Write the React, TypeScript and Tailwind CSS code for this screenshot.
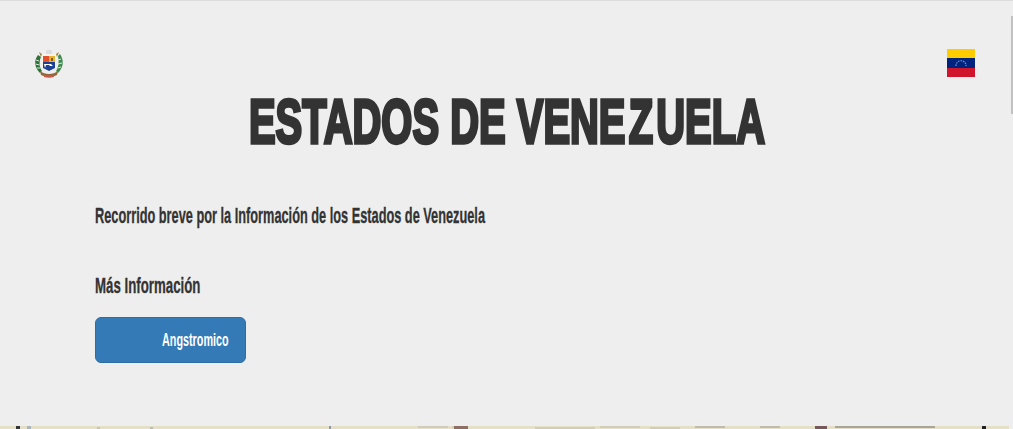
const CoatOfArms = () => (
  <svg width="30" height="30" viewBox="0 0 30 30" className="block">
    <circle cx="15" cy="3.500" r="3" fill="#dcdcdc" />
    <path d="M8 5h14v14l-7 4-7-4z" fill="#f6f4ee" />
    <path d="M9 7h6v6H9z" fill="#e2512a" />
    <path d="M15 7h6v6h-6z" fill="#e8b32c" />
    <path d="M17 9h2v3h-2z" fill="#8a5a22" />
    <path d="M9 13h12v6l-6 3-6-3z" fill="#1d3f94" />
    <path d="M10 15h7l2 2h-3l-1-1h-3l-1 3z" fill="#fff" />
    <path d="M5 3l3 2-1 3z" fill="#9c8a3c" />
    <path d="M25 3l-3 2 1 3z" fill="#9c8a3c" />
    <path d="M4 6C0 11 0 18 6 24l2-2C5 18 5 12 7 8z" fill="#2c7238" />
    <path d="M2 11l3 1M1.500 15l4 1M3 19l3 0" stroke="#dfe8dc" strokeWidth="1" />
    <path d="M26 5c4 6 4 13-2 19l-2-2c3-4 3-10 2-15z" fill="#3f8a4d" />
    <path d="M27 10l-3 1M28 14l-4 1M27 18l-3 1" stroke="#dfe8dc" strokeWidth="1" />
    <path d="M6 22c5 4 13 4 18 0l-1 4c-4 2-12 2-16 0z" fill="#94683a" />
    <path d="M10 26c3 1 7 1 10 0v2c-3 1-7 1-10 0z" fill="#c9574a" />
  </svg>
);

const Flag = () => (
  <svg width="28" height="28" viewBox="0 0 28 28" className="block">
    <rect width="28" height="9" fill="#ffcc00" />
    <rect y="9" width="28" height="10" fill="#00247d" />
    <rect y="19" width="28" height="9" fill="#cf142b" />
    <path d="M9 17c0-7 10-7 10 0" fill="none" stroke="#7f95d0" strokeWidth="1.200" strokeDasharray="1.500 1" />
  </svg>
);

const MapEdge = () => (
  <svg width="1009" height="3" viewBox="0 0 1009 3" className="block">
    <rect width="1009" height="3" fill="#e6dfc8" />
    <rect x="16" width="4" height="3" fill="#333" />
    <rect x="27" width="4" height="3" fill="#a9b4bb" />
    <rect x="97" y="1" width="3" height="2" fill="#c8c4b4" />
    <rect x="150" y="1" width="3" height="2" fill="#bdbcb4" />
    <rect x="329" width="2" height="3" fill="#8a97a6" />
    <path d="M418 1h30M452 1h16" stroke="#bdb9ac" strokeWidth="1" />
    <rect x="454" width="14" height="3" fill="#8d6f63" />
    <path d="M535 2h60M600 1h40M650 2h30" stroke="#bfbaa9" strokeWidth="1" />
    <path d="M695 1h30M760 1h20" stroke="#9a978c" strokeWidth="1" />
    <rect x="815" width="12" height="3" fill="#75585a" />
    <path d="M835 1h100" stroke="#a9a598" strokeWidth="2" />
    <rect x="982" width="4" height="3" fill="#222" />
  </svg>
);

const App = () => {
  return (
    <div className="h-[429px] overflow-hidden bg-[#eeeeee] border-t border-[#dcdcdc] relative font-['Liberation_Sans',sans-serif] text-[#333333]">
      {/* Header icons */}
      <div className="flex items-start justify-between pl-[34px] pr-[38px] pt-[48px] h-[81px]">
        <CoatOfArms />
        <Flag />
      </div>

      <h1 className="h-[78px] flex justify-center text-[63px] leading-[78px] font-bold whitespace-nowrap [-webkit-text-stroke:3.5px_#333333]">
        <span className="inline-block scale-x-[0.634]">
          ESTADOS DE VENE
          <span className="relative inline-block mx-[5px]">
            Z
            <svg width="44" height="34" viewBox="0 0 44 34" className="absolute left-0 top-0">
              <path d="M2 28L18 20H38L24 28z" fill="#333333" />
            </svg>
          </span>
          UELA
        </span>
      </h1>

      <main className="pl-[95px] pt-[41px]">
        <p className="text-[22px] leading-[30px] font-bold whitespace-nowrap origin-left scale-x-[0.58] w-fit [-webkit-text-stroke:0.3px_#333333]">
          Recorrido breve por la Información de los Estados de Venezuela
        </p>
        <p className="mt-[40px] text-[22px] leading-[30px] font-bold whitespace-nowrap origin-left scale-x-[0.603] w-fit [-webkit-text-stroke:0.3px_#333333]">
          Más Información
        </p>
        <button className="mt-[16px] block w-[151px] h-[46px] rounded-md bg-[#337ab7] border border-[#2e6da4] pl-[66px] text-left text-white">
          <span className="block text-[18px] leading-5 font-bold whitespace-nowrap origin-left scale-x-[0.6] w-fit">Angstromico</span>
        </button>
      </main>

      {/* fake scrollbar */}
      <div className="absolute right-0 top-[15px] w-[2px] h-[98px] bg-[#c1c1c1]" />
      <div className="absolute left-0 bottom-0">
        <MapEdge />
      </div>
    </div>
  );
};

export default App;
